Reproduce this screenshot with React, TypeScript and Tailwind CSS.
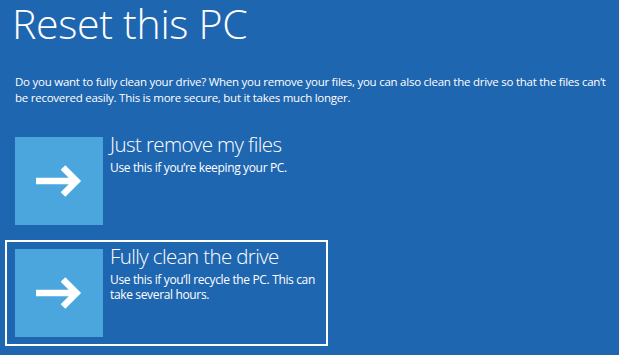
import { ReactNode } from 'react';

function Arrow() {
  return (
    <svg width="46" height="34" viewBox="0 0 46 34" className="block">
      <path d="M0 17 H41 M27 3.5 L40.5 17 L27 30.5" fill="none" stroke="white" strokeWidth="6.5" strokeLinejoin="miter" />
    </svg>
  );
}

function Option({
  title,
  children,
  selected,
}: {
  title: string;
  children: ReactNode;
  selected?: boolean;
}) {
  return (
    <div
      className={`flex w-[323px] h-[106px] border-2 pl-[8px] pt-[7px] ${
        selected ? 'border-white' : 'border-transparent'
      }`}
    >
      <div className="w-[88px] h-[88px] bg-[#4ba6dd] flex items-center justify-center shrink-0">
        <Arrow />
      </div>
      <div className="ml-[7px] -mt-[7px] w-[216px]">
        <h2 className="text-[20.5px] font-light leading-[28px] tracking-[-0.6px] text-white">{title}</h2>
        <p className="text-[12px] leading-[15px] tracking-[-0.35px] text-white mt-[2px]">{children}</p>
      </div>
    </div>
  );
}

export default function App() {
  return (
    <div className="w-[619px] h-[355px] bg-[#1f66b1] text-white font-['Open_Sans','Noto_Sans',sans-serif] overflow-hidden">
      <h1 className="pl-[12px] text-[41px] font-light leading-[58px] tracking-[-0.3px] -mt-[6px]">
        Reset this PC
      </h1>
      <p className="mt-[22px] pl-[15px] text-[11.5px] leading-[16px] tracking-[-0.25px] whitespace-nowrap">
        Do you want to fully clean your drive? When you remove your files, you can also clean the drive so that the files can’t
        <br />
        be recovered easily. This is more secure, but it takes much longer.
      </p>
      <div className="mt-[22px] pl-[5px] flex flex-col gap-[6px]">
        <Option title="Just remove my files">Use this if you’re keeping your PC.</Option>
        <Option title="Fully clean the drive" selected>
          Use this if you’ll recycle the PC. This can take several hours.
        </Option>
      </div>
    </div>
  );
}
